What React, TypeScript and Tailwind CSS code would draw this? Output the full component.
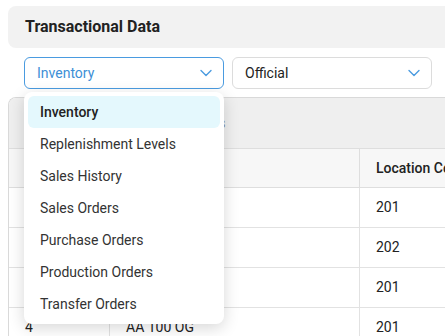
import React from 'react';

const options = [
  'Inventory',
  'Replenishment Levels',
  'Sales History',
  'Sales Orders',
  'Purchase Orders',
  'Production Orders',
  'Transfer Orders',
];

const rows = [
  { id: 1, item: 'AA 100 OG', loc: '201' },
  { id: 2, item: 'AA 100 OG', loc: '202' },
  { id: 3, item: 'AA 100 OG', loc: '201' },
  { id: 4, item: 'AA 100 OG', loc: '201' },
];

const Chevron = () => (
  <svg width="12" height="8" viewBox="0 0 12 8" fill="none" className="text-[#4a9be0]">
    <path d="M1 1.5l5 5 5-5" stroke="currentColor" strokeWidth="1.4" strokeLinecap="round" strokeLinejoin="round" />
  </svg>
);

export default function App() {
  return (
    <div className="h-[336px] w-[445px] overflow-hidden bg-white pl-2 pt-[6px] font-['Roboto',sans-serif]">
      <div className="flex h-[42px] w-[460px] items-center rounded-l-lg bg-[#f2f2f2] pl-[17px]">
        <h1 className="text-[16px] font-bold text-[#222]">Transactional Data</h1>
      </div>

      <div className="relative mt-[9px] flex gap-2 pl-4">
        <button className="flex h-8 w-[200px] items-center justify-between rounded-md border border-[#4a9be0] bg-white pl-3 pr-[11px] text-[14px] text-[#3d8fd6]">
          Inventory
          <Chevron />
        </button>
        <button className="flex h-8 w-[200px] items-center justify-between rounded-md border border-[#dcdcdc] bg-white pl-3 pr-[11px] text-[14px] text-[#222]">
          Official
          <Chevron />
        </button>

        <div className="absolute left-4 top-[35px] z-10 w-[200px] rounded-lg bg-white p-1 shadow-[0_4px_16px_rgba(0,0,0,0.16)]">
          {options.map((opt, i) => (
            <div
              key={opt}
              className={`flex h-8 items-center rounded-md pl-3 text-[14px] ${
                i === 0 ? 'bg-[#e4f8fd] font-medium text-[#222]' : 'text-[#333]'
              }`}
            >
              {opt}
            </div>
          ))}
        </div>
      </div>

      <div className="mt-[8px] w-[460px] overflow-hidden rounded-tl-lg border-l border-t border-[#d9d9d9]">
        <div className="flex h-[50px] items-center bg-[#efefef] pl-[161px] text-[14px] text-[#888]">
          Columns
        </div>
        <div className="flex h-10 border-y border-[#dedede] bg-[#f7f7f7] text-[14px] font-medium text-[#222]">
          <div className="flex w-[100px] items-center pl-4">#</div>
          <div className="flex w-[250px] items-center border-l border-[#dedede] pl-4">Item Code</div>
          <div className="flex flex-1 items-center border-l border-[#dedede] pl-4">Location Code</div>
        </div>
        {rows.map((r) => (
          <div key={r.id} className="flex h-10 border-b border-[#e2e2e2] text-[14px] text-[#222]">
            <div className="flex w-[100px] items-center pl-4">{r.id}</div>
            <div className="flex w-[250px] items-center border-l border-[#e2e2e2] pl-4">{r.item}</div>
            <div className="flex flex-1 items-center border-l border-[#e2e2e2] pl-4">{r.loc}</div>
          </div>
        ))}
      </div>
    </div>
  );
}
